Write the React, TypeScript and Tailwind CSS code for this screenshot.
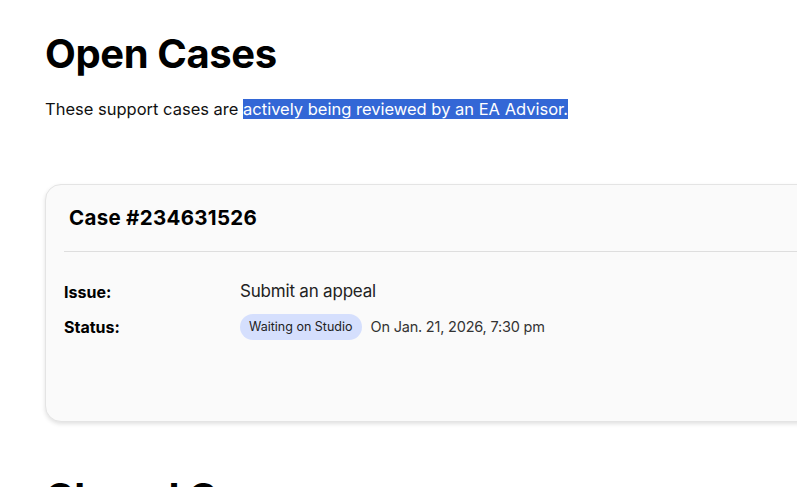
export default function App() {
  return (
    <div className="min-h-screen w-full overflow-hidden bg-white font-['Inter',sans-serif] text-black">
      <div className="pl-[45px] pt-[28px]">
        <h1 className="text-[40px] font-bold leading-[52px] tracking-[-0.4px]">Open Cases</h1>
        <p className="mt-[17px] text-[16.5px] leading-[25px] text-[#111]">
          These support cases are{' '}
          <span className="bg-[#3367d6] text-white">actively being reviewed by an EA Advisor.</span>
        </p>

        <div className="mt-[62px] w-[840px] rounded-[16px] border border-[#e4e4e4] bg-[#fafafa] shadow-[0_2px_4px_rgba(0,0,0,0.12)]">
          <div className="ml-[18px] border-b border-[#dedede] pb-[20px] pl-[5px] pt-[20px]">
            <h2 className="text-[20.5px] font-bold leading-[26px] tracking-[0.3px]">Case #234631526</h2>
          </div>
          <div className="flex flex-col gap-[9px] pb-[81px] pl-[18px] pt-[27px]">
            <div className="flex items-center">
              <span className="w-[176px] text-[16px] font-bold">Issue:</span>
              <span className="text-[17px] tracking-[-0.2px] text-[#222]">Submit an appeal</span>
            </div>
            <div className="flex items-center">
              <span className="w-[176px] text-[16px] font-bold">Status:</span>
              <span className="rounded-full bg-[#d5dffd] px-[9px] py-[5px] text-[12.5px] leading-[16px] text-[#222]">
                Waiting on Studio
              </span>
              <span className="ml-[9px] text-[14.5px] tracking-[-0.2px] text-[#333]">On Jan. 21, 2026, 7:30 pm</span>
            </div>
          </div>
        </div>

        <h1 className="mt-[50px] text-[40px] font-bold leading-[52px] tracking-[-0.4px]">Closed Cases</h1>
      </div>
    </div>
  );
}
